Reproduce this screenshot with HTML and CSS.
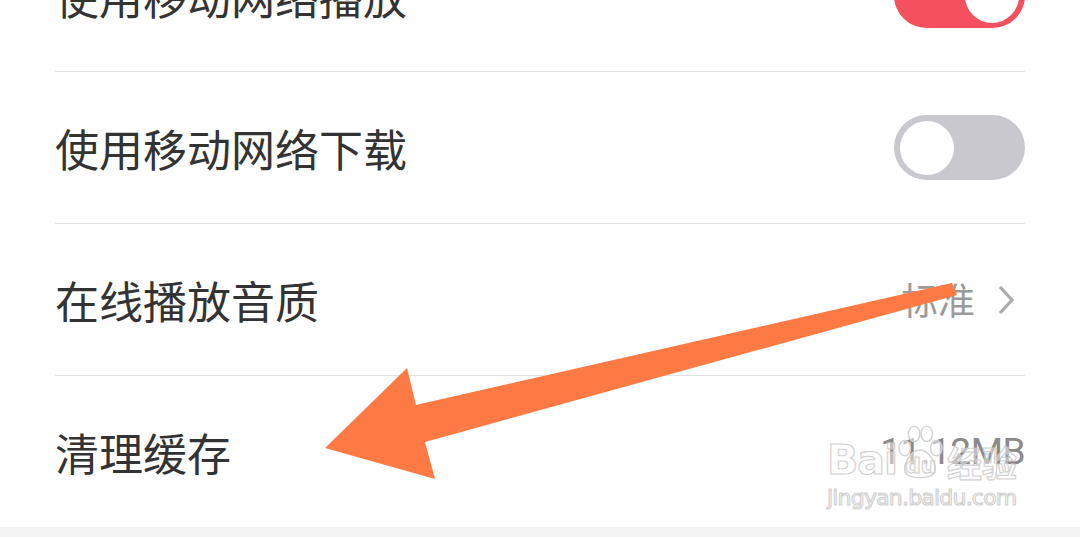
FILE: index.html
```html
<!DOCTYPE html>
<html lang="zh-CN">
<head>
  <meta charset="UTF-8">
  <meta name="viewport" content="width=device-width, initial-scale=1.0">
  <title>设置</title>
  <link rel="stylesheet" href="styles.css">
</head>
<body>
  <ul class="settings">
    <li class="row">
      <span class="label">使用移动网络播放</span>
      <span class="switch on"><span class="knob"></span></span>
    </li>
    <li class="row">
      <span class="label">使用移动网络下载</span>
      <span class="switch"><span class="knob"></span></span>
    </li>
    <li class="row">
      <span class="label">在线播放音质</span>
      <span class="value">标准<svg class="chevron" width="18" height="30" viewBox="0 0 18 30"><path d="M3 2 L15 15 L3 28" fill="none" stroke="#ababab" stroke-width="3.2"/></svg></span>
    </li>
    <li class="row">
      <span class="label">清理缓存</span>
      <span class="size">11.12MB</span>
    </li>
  </ul>

  <!-- annotation arrow drawn over the screenshot -->
  <svg class="arrow" width="1080" height="537" viewBox="0 0 1080 537">
    <polygon points="952,283 957,295 425,442 435,479 325,448 407,368 416,405" fill="#fe7a45"/>
  </svg>

  <div class="watermark">
    <div class="wm-top">
      <span class="wm-logo">Bai</span>
      <svg class="paw" width="46" height="54" viewBox="0 0 48 56">
        <g fill="rgba(255,255,255,0.45)" stroke="#d2d2d2" stroke-width="1.5">
          <ellipse cx="8" cy="24" rx="6" ry="8"/>
          <ellipse cx="18" cy="9" rx="6" ry="8"/>
          <ellipse cx="31" cy="9" rx="6" ry="8"/>
          <ellipse cx="41" cy="24" rx="6" ry="8"/>
          <path d="M24 26 C14 26 4 44 10 51 C15 56 33 56 38 51 C44 44 34 26 24 26 Z"/>
        </g>
      </svg>
      <span class="wm-du">du</span>
      <span class="wm-cn">经验</span>
    </div>
    <div class="wm-url">jingyan.baidu.com</div>
  </div>
</body>
</html>
```

FILE: styles.css
```css
* { box-sizing: border-box; }
html, body {
  height: 100%;
}
body {
  margin: 0;
  background: #f4f4f4;
  font-family: "Noto Sans CJK SC", "Noto Sans", sans-serif;
  overflow: hidden;
  position: relative;
}
.settings {
  list-style: none;
  margin: -80px 0 0;
  padding: 0 55px;
  background: #fff;
}
.row {
  height: 152px;
  display: flex;
  align-items: center;
  justify-content: space-between;
  border-bottom: 1px solid #e2e2e2;
}
.row:last-child {
  height: 151px;
  border-bottom: 0;
}
.label {
  font-size: 44px;
  color: #333;
  line-height: 1;
}
.switch {
  width: 131px;
  height: 65px;
  border-radius: 33px;
  background: #c8c8ce;
  display: flex;
  align-items: center;
  padding: 0 6px;
}
.switch.on {
  background: #f4505e;
  justify-content: flex-end;
}
.knob {
  width: 54px;
  height: 54px;
  border-radius: 50%;
  background: #fff;
}
.value {
  display: flex;
  align-items: center;
  gap: 22px;
  font-size: 37px;
  color: #9a9a9a;
  line-height: 1;
  padding-right: 10px;
}
.size {
  font-family: "Roboto", "Noto Sans", sans-serif;
  font-size: 37px;
  letter-spacing: -0.5px;
  color: #8a8a8a;
  line-height: 1;
}
.arrow {
  position: absolute;
  left: 0;
  top: 0;
  pointer-events: none;
}
.watermark {
  position: absolute;
  left: 827px;
  top: 421px;
  color: rgba(255, 255, 255, 0.45);
  -webkit-text-stroke: 1.2px rgba(200, 200, 200, 0.85);
  font-family: "DejaVu Sans", sans-serif;
}
.wm-top {
  display: flex;
  align-items: flex-end;
  height: 58px;
}
.wm-logo {
  font-size: 41px;
  font-weight: bold;
  line-height: 1;
  margin-bottom: -2px;
  letter-spacing: -1px;
}
.paw {
  margin-left: 0;
}
.wm-du {
  font-size: 22px;
  font-weight: bold;
  margin-left: -38px;
  width: 38px;
  line-height: 1;
  margin-bottom: 2px;
}
.wm-cn {
  font-family: "Noto Sans CJK SC", sans-serif;
  font-size: 35px;
  font-weight: bold;
  line-height: 1;
  margin-left: 4px;
}
.wm-url {
  font-size: 22px;
  line-height: 1;
  margin-top: 8px;
  letter-spacing: -0.8px;
}
```
